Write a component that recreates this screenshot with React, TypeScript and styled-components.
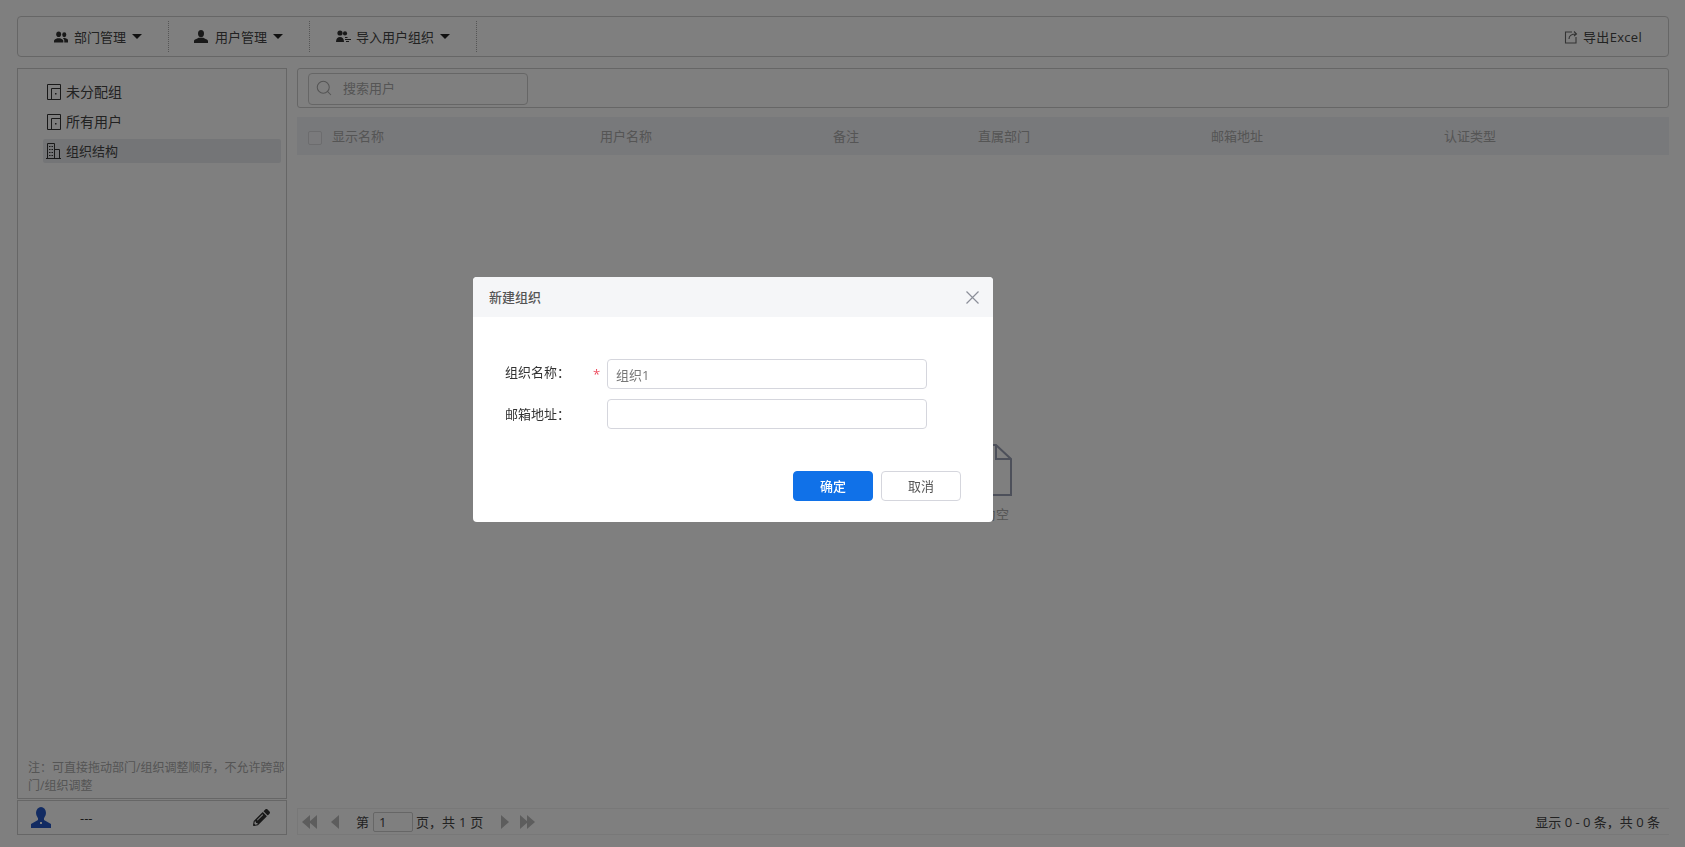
import styled, { createGlobalStyle } from 'styled-components';
import { FaPencilAlt } from 'react-icons/fa';
import { Search } from 'lucide-react';

const GlobalStyle = createGlobalStyle`
    html, body {
        margin: 0;
        padding: 0;
        background: #fff;
    }
    * {
        box-sizing: border-box;
    }
    body {
        font-family: "Open Sans", "Noto Sans CJK SC", "Liberation Sans", sans-serif;
        font-size: 13px;
        color: #444;
    }
`;

const Page = styled.div`
    height: 847px;
    padding: 16px 16px 12px 17px;
    display: flex;
    flex-direction: column;
    overflow: hidden;
`;
const Toolbar = styled.div`
    height: 41px;
    flex-shrink: 0;
    padding: 4px 26px 4px 11px;
    display: flex;
    align-items: stretch;
    border: 1px solid #ccc;
    border-radius: 4px;
`;
const ToolButton = styled.div`
    padding: 0 26px 0 25px;
    display: flex;
    align-items: center;
    border-right: 1px dotted #aaa;
    line-height: 18px;
    color: #444;
    svg {
        margin-right: 6px;
    }
`;
const Caret = styled.span`
    width: 0;
    height: 0;
    margin-left: 6px;
    border-left: 5px solid transparent;
    border-right: 5px solid transparent;
    border-top: 5px solid #222;
`;
const ExportLink = styled.div`
    margin-left: auto;
    display: flex;
    align-items: center;
    gap: 5px;
    letter-spacing: 0.3px;
    line-height: 18px;
    color: #444;
`;
const Main = styled.div`
    flex: 1;
    min-height: 0;
    margin-top: 11px;
    display: flex;
    gap: 10px;
`;
const Sidebar = styled.div`
    width: 270px;
    flex-shrink: 0;
    display: flex;
    flex-direction: column;
`;
const TreePanel = styled.div`
    flex: 1;
    padding-top: 11px;
    display: flex;
    flex-direction: column;
    border: 1px solid #ccc;
`;
const TreeRow = styled.div<{ $active?: boolean }>`
    height: 24px;
    margin: 0 5px 5.5px 25px;
    padding-left: ${(props) => (props.$active ? 3 : 4)}px;
    display: flex;
    align-items: center;
    gap: 5px;
    font-size: ${(props) => (props.$active ? 13 : 14)}px;
    line-height: 24px;
    color: #444;
    border-radius: 2px;
    background: ${(props) => (props.$active ? '#e9ebef' : 'transparent')};
`;
const Note = styled.div`
    margin-top: auto;
    padding: 0 0 3px 10px;
    font-size: 12px;
    line-height: 18px;
    color: #aaa;
`;
const UserBar = styled.div`
    height: 35px;
    flex-shrink: 0;
    margin-top: 1px;
    padding: 0 16px 0 12px;
    display: flex;
    align-items: center;
    border: 1px solid #ccc;
`;
const UserName = styled.span`
    margin-left: 28px;
    color: #333;
`;
const EditIcon = styled(FaPencilAlt)`
    margin-left: auto;
    color: #333;
`;
const Content = styled.div`
    flex: 1;
    min-width: 0;
    display: flex;
    flex-direction: column;
`;
const SearchBar = styled.div`
    height: 40px;
    flex-shrink: 0;
    padding: 4px 10px;
    border: 1px solid #ccc;
    border-radius: 3px;
`;
const SearchField = styled.div`
    width: 220px;
    height: 32px;
    padding: 0 0 2px 6px;
    display: flex;
    align-items: center;
    gap: 10px;
    border: 1px solid #ccc;
    border-radius: 4px;
    line-height: 26px;
    color: #aaa;
`;
const TableHead = styled.div`
    height: 38px;
    flex-shrink: 0;
    margin-top: 9px;
    padding-left: 11px;
    display: grid;
    grid-template-columns: 24px 268px 233px 145px 233px 233px 1fr;
    align-items: center;
    background: #f1f2f6;
    color: #aaa;
    line-height: 18px;
`;
const CheckBox = styled.span`
    width: 14px;
    height: 14px;
    margin-top: 3px;
    border: 1px solid #d8d8dc;
    border-radius: 2px;
    background: #f4f5f8;
`;
const EmptyArea = styled.div`
    flex: 1;
    padding-top: 289px;
    display: flex;
    flex-direction: column;
    align-items: center;
    color: #aaa;
`;
const EmptyText = styled.div`
    margin-top: 9px;
    line-height: 18px;
`;
const Pager = styled.div`
    height: 27px;
    flex-shrink: 0;
    padding: 0 9px 0 4px;
    display: flex;
    align-items: center;
    border: 1px solid #f1f1f1;
    border-width: 1px 0 1px 1px;
    line-height: 18px;
    color: #444;
`;
const PagerArrows = styled.span<{ $gap: number; $left: number }>`
    display: flex;
    align-items: center;
    gap: ${(props) => props.$gap}px;
    margin-left: ${(props) => props.$left}px;
`;
const PageLabel = styled.span`
    margin-left: 16px;
`;
const PageInput = styled.span`
    width: 40px;
    height: 20px;
    margin: 0 3px 0 4px;
    padding-left: 5px;
    border: 1px solid #ccc;
    border-radius: 2px;
    line-height: 18px;
    background: #fff;
`;
const PageTotal = styled.span`
    word-spacing: 0.5px;
`;
const PageSummary = styled.span`
    margin-left: auto;
`;
const Overlay = styled.div`
    position: fixed;
    inset: 0;
    background: rgba(0, 0, 0, 0.5);
`;
const Dialog = styled.div`
    position: fixed;
    left: 473px;
    top: 277px;
    width: 520px;
    height: 245px;
    display: flex;
    flex-direction: column;
    background: #fff;
    border-radius: 4px;
    overflow: hidden;
`;
const DialogHead = styled.div`
    height: 40px;
    flex-shrink: 0;
    padding: 0 14px 0 16px;
    display: flex;
    align-items: center;
    justify-content: space-between;
    background: #f5f6f8;
    font-weight: 500;
    line-height: 18px;
    color: #555;
`;
const DialogForm = styled.div`
    padding: 42px 0 0 32px;
    display: flex;
    flex-direction: column;
    gap: 10px;
`;
const FormRow = styled.div`
    height: 30px;
    display: flex;
    align-items: center;
    color: #333;
    line-height: 18px;
`;
const FormLabel = styled.span<{ $lift: number }>`
    width: 88px;
    margin-top: ${(props) => -props.$lift}px;
`;
const Required = styled.span`
    width: 14px;
    color: #ee4d5f;
    font-size: 13px;
`;
const TextField = styled.div`
    width: 320px;
    height: 30px;
    padding-left: 8px;
    border: 1px solid #d5d6dd;
    border-radius: 4px;
    line-height: 30px;
    color: #777;
`;
const DialogFoot = styled.div`
    margin-top: auto;
    padding: 0 32px 21px 0;
    display: flex;
    justify-content: flex-end;
    gap: 8px;
`;
const Button = styled.div<{ $primary?: boolean }>`
    width: 80px;
    height: 30px;
    display: flex;
    align-items: center;
    justify-content: center;
    border: 1px solid ${(props) => (props.$primary ? '#1071e8' : '#d5d6dd')};
    border-radius: 4px;
    background: ${(props) => (props.$primary ? '#1071e8' : '#fff')};
    color: ${(props) => (props.$primary ? '#fff' : '#555')};
    font-weight: ${(props) => (props.$primary ? 500 : 400)};
    line-height: 18px;
`;

const GroupIcon = () => (
    <svg width="14" height="12" viewBox="0 0 15 12" fill="#333">
        <ellipse cx="5" cy="3" rx="2.6" ry="3" />
        <path d="M0 12v-2c0-1.3 2.2-1.6 3.4-2.6h3.2C7.8 8.4 10 8.7 10 10v2z" />
        <ellipse cx="11" cy="3.6" rx="2.2" ry="2.6" />
        <path d="M11 12v-2.4c0-.8-.6-1.4-1.4-2l.7-.4h1.6c1 .7 3.1 1 3.1 2.2V12z" />
    </svg>
);
const UserIcon = () => (
    <svg width="14" height="13" viewBox="0 0 14 13" fill="#333" style={{ marginRight: 7 }}>
        <ellipse cx="7" cy="3.6" rx="3" ry="3.6" />
        <path d="M0 13v-2c0-1.5 3-2 4.5-3.2h5C11 9 14 9.500 14 11v2z" />
    </svg>
);
const ImportIcon = () => (
    <svg width="16" height="13" viewBox="-1 0 16 13" style={{ marginRight: 5 }}>
        <circle cx="4" cy="3" r="2.6" fill="#333" />
        <path d="M0 12c0-3.4 1.6-5 4-5s4 1.6 4 5z" fill="#333" />
        <circle cx="9" cy="3.4" r="2.1" fill="#333" />
        <path d="M9 7h2l1 1H9zM9 9h6v1H9zM10 11h3v1h-3z" fill="#333" />
    </svg>
);
const ExportIcon = () => (
    <svg width="14" height="14" viewBox="0 0 14 14" fill="none" stroke="#666" strokeWidth="1.1">
        <path d="M8 2H1.500v11h10.500V7" />
        <path d="M5 9c0-3 2-5 7-5M10 1.500l2.500 2.500L10 6" />
    </svg>
);
const DoorIcon = () => (
    <svg width="14" height="16" viewBox="0 0 14 16" fill="none" stroke="#333" strokeWidth="1">
        <path d="M.5.5h13v15H.5z" />
        <path d="M4.500 15.500V4.500h9" />
        <rect x="8" y="9" width="1.5" height="1.5" fill="#333" stroke="none" />
    </svg>
);
const BuildingIcon = () => (
    <svg width="15" height="16" viewBox="0 0 15 16" fill="none" stroke="#333" strokeWidth="1">
        <path d="M0 15.500h15M1.500 15.500V.5h7v15M8.500 6.500h5v9" />
        <path d="M3 3.500h1.500M5.500 3.500H7M3 6.500h1.500M5.500 6.500H7M3 9.500h1.500M5.500 9.500H7M3 12.500h1.500M5.500 12.500H7" />
    </svg>
);
const AvatarIcon = () => (
    <svg width="22" height="21" viewBox="0 0 22 21">
        <ellipse cx="11" cy="6" rx="5" ry="6" fill="#2457c5" />
        <path d="M8 11h6v2l7 4v4H1v-4l7-4z" fill="#2457c5" />
        <path d="M10 15h2v2h-2z" fill="#fff" />
    </svg>
);
const CloseIcon = () => (
    <svg width="13" height="13" viewBox="0 0 13 13" fill="none" stroke="#8b8f99" strokeWidth="1.2">
        <path d="M.5.5l12 12M12.500.5l-12 12" />
    </svg>
);
const PagerArrow = ({ double, right }: { double?: boolean; right?: boolean }) => (
    <svg
        width={double ? 15 : 9}
        height="14"
        viewBox={double ? '0 0 15 14' : '0 0 9 14'}
        fill="#bbb"
        style={{ transform: right ? 'scaleX(-1)' : undefined }}
    >
        <path d="M8 0v14L0 7z" />
        {double && <path d="M15 0v14L7 7z" />}
    </svg>
);
const EmptyFileIcon = () => (
    <svg width="58" height="52" viewBox="0 0 58 52" fill="none" stroke="#9aa0b4" strokeWidth="2">
        <path d="M2 1h40l15 14v36H2z" />
        <path d="M42 1v14h15" />
    </svg>
);

const columns = ['显示名称', '用户名称', '备注', '直属部门', '邮箱地址', '认证类型'];

function App() {
    return (
        <>
            <GlobalStyle />
            <Page>
                <Toolbar>
                    <ToolButton>
                        <GroupIcon />
                        部门管理
                        <Caret />
                    </ToolButton>
                    <ToolButton>
                        <UserIcon />
                        用户管理
                        <Caret />
                    </ToolButton>
                    <ToolButton>
                        <ImportIcon />
                        导入用户组织
                        <Caret />
                    </ToolButton>
                    <ExportLink>
                        <ExportIcon />
                        导出Excel
                    </ExportLink>
                </Toolbar>
                <Main>
                    <Sidebar>
                        <TreePanel>
                            <TreeRow>
                                <DoorIcon />
                                未分配组
                            </TreeRow>
                            <TreeRow>
                                <DoorIcon />
                                所有用户
                            </TreeRow>
                            <TreeRow $active>
                                <BuildingIcon />
                                组织结构
                            </TreeRow>
                            <Note>注：可直接拖动部门/组织调整顺序，不允许跨部门/组织调整</Note>
                        </TreePanel>
                        <UserBar>
                            <AvatarIcon />
                            <UserName>---</UserName>
                            <EditIcon size={17} />
                        </UserBar>
                    </Sidebar>
                    <Content>
                        <SearchBar>
                            <SearchField>
                                <Search size={18} strokeWidth={1.4} color="#aaa" />
                                搜索用户
                            </SearchField>
                        </SearchBar>
                        <TableHead>
                            <CheckBox />
                            {columns.map((name) => (
                                <span key={name}>{name}</span>
                            ))}
                        </TableHead>
                        <EmptyArea>
                            <EmptyFileIcon />
                            <EmptyText>数据为空</EmptyText>
                        </EmptyArea>
                        <Pager>
                            <PagerArrows $gap={14} $left={0}>
                                <PagerArrow double />
                                <PagerArrow />
                            </PagerArrows>
                            <PageLabel>第</PageLabel>
                            <PageInput>1</PageInput>
                            <PageTotal>页，共 1 页</PageTotal>
                            <PagerArrows $gap={11} $left={17}>
                                <PagerArrow right />
                                <PagerArrow double right />
                            </PagerArrows>
                            <PageSummary>显示 0 - 0 条，共 0 条</PageSummary>
                        </Pager>
                    </Content>
                </Main>
            </Page>
            <Overlay />
            <Dialog>
                <DialogHead>
                    新建组织
                    <CloseIcon />
                </DialogHead>
                <DialogForm>
                    <FormRow>
                        <FormLabel $lift={4}>组织名称：</FormLabel>
                        <Required>*</Required>
                        <TextField>组织1</TextField>
                    </FormRow>
                    <FormRow>
                        <FormLabel $lift={0}>邮箱地址：</FormLabel>
                        <Required />
                        <TextField />
                    </FormRow>
                </DialogForm>
                <DialogFoot>
                    <Button $primary>确定</Button>
                    <Button>取消</Button>
                </DialogFoot>
            </Dialog>
        </>
    );
}

export default App;
